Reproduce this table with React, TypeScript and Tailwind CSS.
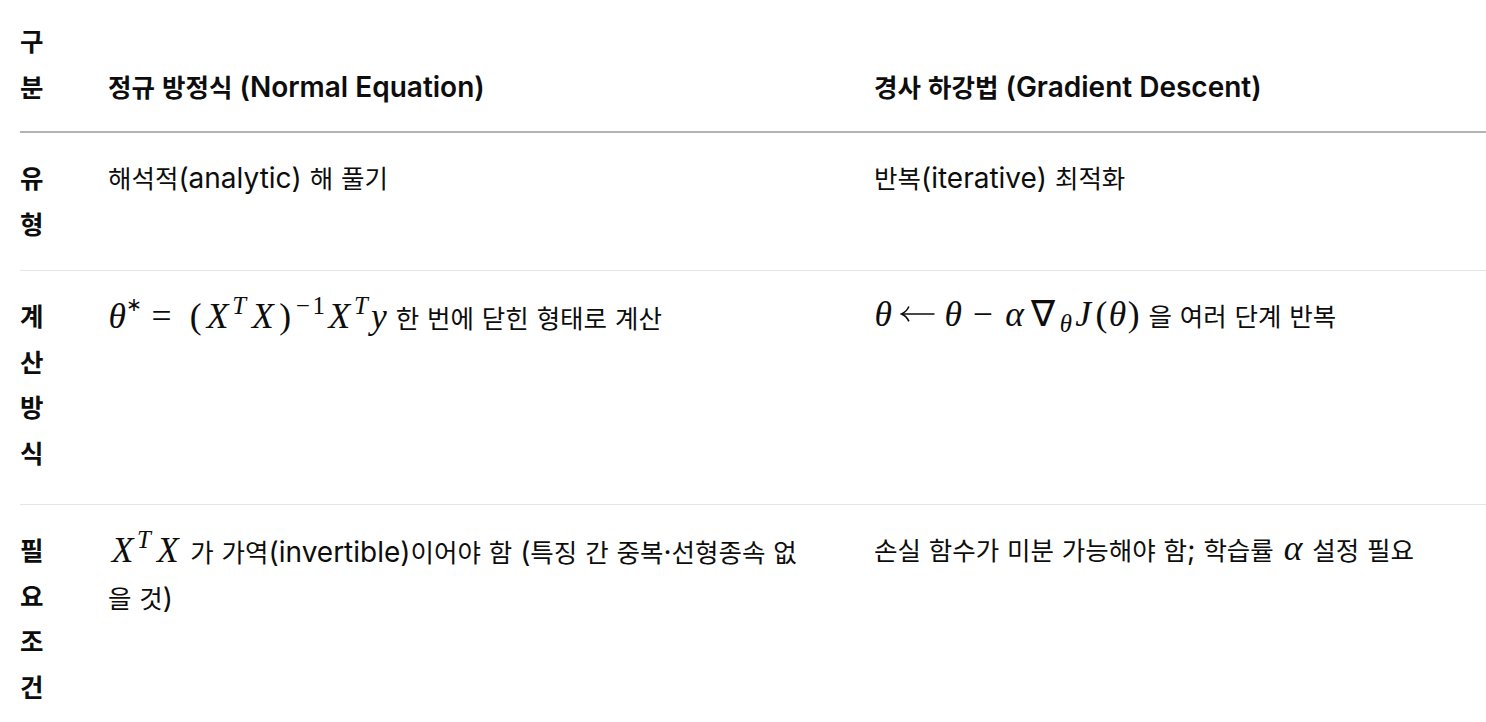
import type { ReactNode } from "react";

// Hangul runs get their own size, Latin runs use the body size
const Ko = ({ s }: { s: string }) => (
  <>
    {s.split(/([\u3131-\uD7A3]+)/).map((part, i) =>
      /[\u3131-\uD7A3]/.test(part) ? (
        <span key={i} className="text-[25.5px]">
          {part}
        </span>
      ) : (
        part
      )
    )}
  </>
);

const Math = ({ children }: { children: ReactNode }) => (
  <span className="font-['Liberation_Serif',serif] text-[35.5px] leading-none whitespace-nowrap">
    {children}
  </span>
);

// glyph box, roughly Computer Modern advance widths
const G = ({ w, children, it }: { w: string; children: ReactNode; it?: boolean }) => (
  <span className={`inline-block text-center ${w} ${it ? "italic" : ""}`}>{children}</span>
);

const Sup = ({ children }: { children: ReactNode }) => (
  <span className="align-[0.58em] text-[0.7em] leading-none">{children}</span>
);

const Sub = ({ children }: { children: ReactNode }) => (
  <span className="align-[-0.24em] text-[0.7em] leading-none">{children}</span>
);

const Theta = () => (
  <G w="w-[0.52em]" it>
    θ
  </G>
);
const X = () => (
  <G w="w-[0.82em]" it>
    X
  </G>
);
const TT = () => (
  <Sup>
    <span className="inline-block w-[0.65em] text-left italic">T</span>
  </Sup>
);

const LeftArrow = () => (
  <span className="inline-block w-[1.45em] text-center">
    <svg viewBox="0 0 36 20" className="inline-block h-[0.56em] w-[1em] align-[0.06em]" fill="none" stroke="currentColor">
      <path d="M2 10H35" strokeWidth="1.6" />
      <path d="M9 2.5C7.5 6 5 8.5 1.5 10C5 11.5 7.5 14 9 17.5" strokeWidth="1.6" />
    </svg>
  </span>
);

const Label = ({ text }: { text: string }) => (
  <div className="flex flex-col text-[25.5px]">
    {text.split("").map((ch, i) => (
      <span key={i}>{ch}</span>
    ))}
  </div>
);

const rows = [
  {
    label: "유형",
    pad: "pt-[23px] pb-[23px]",
    left: <Ko s="해석적(analytic) 해 풀기" />,
    right: <Ko s="반복(iterative) 최적화" />,
  },
  {
    label: "계산방식",
    pad: "pt-[23px] pb-[28px]",
    left: (
      <>
        <Math>
          <Theta />
          <Sup>
            <span className="inline-block w-[0.55em] text-left align-[0.15em] text-[0.75em]">∗</span>
          </Sup>
          <span className="inline-block w-[1.45em] pl-[0.42em] text-left">=</span>
          <G w="w-[0.42em]">(</G>
          <X />
          <TT />
          <X />
          <G w="w-[0.44em]">)</G>
          <Sup>
            <G w="w-[0.78em]">−</G>
            <G w="w-[0.5em]">1</G>
          </Sup>
          <X />
          <TT />
          <G w="w-[0.5em]" it>
            y
          </G>
        </Math>{" "}
        <Ko s="한 번에 닫힌 형태로 계산" />
      </>
    ),
    right: (
      <>
        <Math>
          <Theta />
          <LeftArrow />
          <Theta />
          <G w="w-[1.15em]">−</G>
          <G w="w-[0.64em]" it>
            α
          </G>
          <G w="w-[0.95em]">∇</G>
          <Sub>
            <G w="w-[0.5em]" it>
              θ
            </G>
          </Sub>
          <G w="w-[0.63em]" it>
            J
          </G>
          <G w="w-[0.39em]">(</G>
          <Theta />
          <G w="w-[0.39em]">)</G>
        </Math>{" "}
        <Ko s="을 여러 단계 반복" />
      </>
    ),
  },
  {
    label: "필요조건",
    pad: "pt-[23px] pb-[28px]",
    left: (
      <>
        <span className="whitespace-nowrap">
          <Math>
            <X />
            <TT />
            <X />
          </Math>{" "}
          <Ko s="가 가역(invertible)이어야 함 (특징 간 중복·선형종속 없" />
        </span>
        <br />
        <Ko s="을 것)" />
      </>
    ),
    right: (
      <>
        <Ko s="손실 함수가 미분 가능해야 함; 학습률 " />
        <Math>
          <G w="w-[0.64em]" it>
            α
          </G>
        </Math>{" "}
        <Ko s="설정 필요" />
      </>
    ),
  },
];

export default function App() {
  return (
    <div className="min-h-screen bg-white pl-[20px] font-['Inter','Noto_Sans_CJK_KR',sans-serif] text-[28px] leading-[45.5px] text-[#0d0d0d]">
      <table className="w-[1466px] table-fixed border-collapse">
        <colgroup>
          <col className="w-[56px]" />
          <col className="w-[766px]" />
          <col className="w-[644px]" />
        </colgroup>
        <thead>
          <tr className="border-b-2 border-[#b4b4b4]">
            <th className="pt-[19px] pb-[21px] pr-[32px] text-left align-bottom font-semibold">
              <Label text="구분" />
            </th>
            <th className="px-[32px] pt-[19px] pb-[21px] text-left align-bottom font-semibold">
              <Ko s="정규 방정식 (Normal Equation)" />
            </th>
            <th className="pl-[32px] pt-[19px] pb-[21px] text-left align-bottom font-semibold">
              <Ko s="경사 하강법 (Gradient Descent)" />
            </th>
          </tr>
        </thead>
        <tbody>
          {rows.map((row) => (
            <tr key={row.label} className="border-b border-[#e5e5e5]">
              <td className={`pr-[32px] align-top font-semibold ${row.pad}`}>
                <Label text={row.label} />
              </td>
              <td className={`px-[32px] align-top ${row.pad}`}>{row.left}</td>
              <td className={`pl-[32px] align-top ${row.pad}`}>{row.right}</td>
            </tr>
          ))}
        </tbody>
      </table>
    </div>
  );
}
